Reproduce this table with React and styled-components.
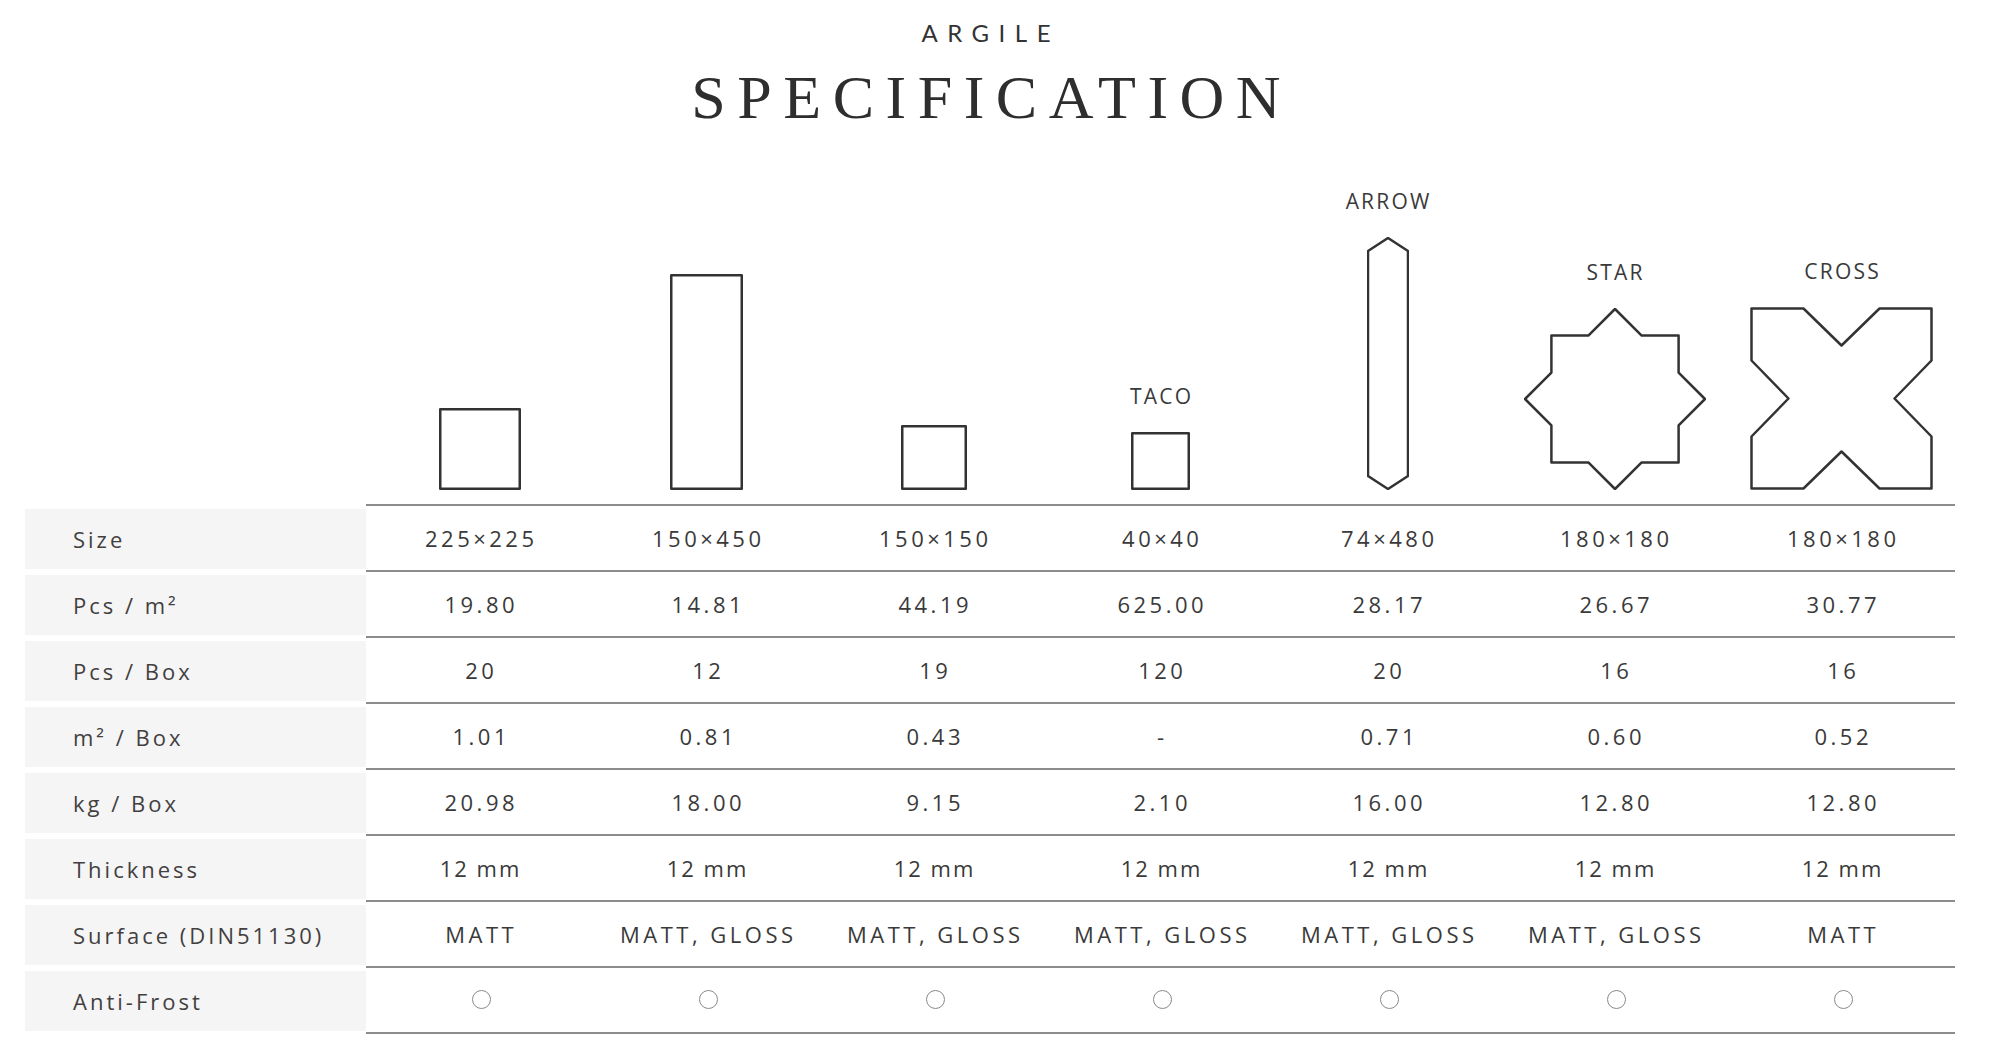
import React from 'react';
import styled, { createGlobalStyle } from 'styled-components';

const GlobalStyle = createGlobalStyle`
  body {
    margin: 0;
    background: #ffffff;
    font-family: "Open Sans", "Noto Sans", sans-serif;
    color: #3a3a3a;
  }
`

const Page = styled.div`
  width: 1930px;
  margin-left: 25px;
  padding-top: 18px;
  padding-bottom: 20px;
`

const Header = styled.header`
  display: flex;
  flex-direction: column;
  align-items: center;
  margin-left: -8px;
`

const Collection = styled.div`
  font-family: "Lato", "Open Sans", sans-serif;
  font-weight: 400;
  font-size: 24px;
  line-height: 30px;
  letter-spacing: 9.5px;
  padding-left: 9.5px;
  color: #333;
`

const Title = styled.h1`
  margin: 10px 0 0;
  font-family: "Liberation Serif", "Times New Roman", serif;
  font-weight: normal;
  font-size: 62px;
  line-height: 78px;
  letter-spacing: 11.5px;
  padding-left: 11.5px;
  color: #2e2e2e;
`

const Row = styled.div`
  display: grid;
  grid-template-columns: 341px 1fr;
`

const ShapeRow = styled(Row)`
  margin-top: 53px;
`

const ShapeCells = styled.div`
  display: grid;
  grid-template-columns: repeat(7, 1fr);
  align-items: end;
  padding-bottom: 13.5px;
  border-bottom: 2px solid #8c8c8c;
`

const ShapeCell = styled.div`
  display: flex;
  flex-direction: column;
  align-items: center;
`

const ShapeName = styled.div`
  font-size: 21px;
  line-height: 24px;
  letter-spacing: 2.2px;
  padding-left: 2.2px;
  margin-bottom: 24px;
  color: #3a3a3a;
`

const Label = styled.div`
  margin: 3px 0;
  background: #f5f5f5;
  display: flex;
  align-items: center;
  padding-left: 48px;
  font-size: 22px;
  letter-spacing: 3px;
  color: #433f3f;
`

const Cells = styled.div`
  display: grid;
  grid-template-columns: repeat(7, 1fr);
  height: 64px;
  border-bottom: 2px solid #8c8c8c;
`

const Cell = styled.div`
  display: flex;
  align-items: center;
  justify-content: center;
  font-size: 22px;
  letter-spacing: ${props => (props.$tight ? '2px' : '3.5px')};
  padding-left: ${props => (props.$tight ? '2px' : '3.5px')};
  color: #3a3a3a;
`

const Mark = styled.span`
  width: 17px;
  height: 17px;
  border: 1.5px solid #8a8a8a;
  border-radius: 50%;
`

const stroke = { fill: 'none', stroke: '#333', strokeWidth: 2.5, strokeLinejoin: 'round' };

const RectShape = ({ w, h }) => (
  <svg width={w} height={h} viewBox={`0 0 ${w} ${h}`}>
    <rect x="1.25" y="1.25" width={w - 2.5} height={h - 2.5} {...stroke} />
  </svg>
)

const ArrowShape = () => (
  <svg width="42" height="253" viewBox="-1 -1 42 253">
    <polygon points="20,0 40,13 40,238 20,251 0,238 0,13" {...stroke} />
  </svg>
)

const StarShape = () => (
  <svg width="182" height="182" viewBox="-1 -1 182 182">
    <polygon
      points="90,0 116.4,26.4 153.6,26.4 153.6,63.6 180,90 153.6,116.4 153.6,153.6 116.4,153.6 90,180 63.6,153.6 26.4,153.6 26.4,116.4 0,90 26.4,63.6 26.4,26.4 63.6,26.4"
      {...stroke}
    />
  </svg>
)

const CrossShape = () => (
  <svg width="183" height="183" viewBox="-1.5 -1.5 183 183">
    <polygon
      points="0,0 52,0 90,37 128,0 180,0 180,52 143,90 180,128 180,180 128,180 90,143 52,180 0,180 0,128 37,90 0,52"
      {...stroke}
    />
  </svg>
)

const shapes = [
  { name: null, drawing: <RectShape w={82} h={82} /> },
  { name: null, drawing: <RectShape w={73} h={216} /> },
  { name: null, drawing: <RectShape w={66} h={65} /> },
  { name: 'TACO', drawing: <RectShape w={59} h={58} /> },
  { name: 'ARROW', drawing: <ArrowShape /> },
  { name: 'STAR', drawing: <StarShape /> },
  { name: 'CROSS', drawing: <CrossShape /> },
]

const rows = [
  { label: 'Size', values: ['225×225', '150×450', '150×150', '40×40', '74×480', '180×180', '180×180'] },
  { label: 'Pcs / m²', values: ['19.80', '14.81', '44.19', '625.00', '28.17', '26.67', '30.77'] },
  { label: 'Pcs / Box', values: ['20', '12', '19', '120', '20', '16', '16'] },
  { label: 'm² / Box', values: ['1.01', '0.81', '0.43', '-', '0.71', '0.60', '0.52'] },
  { label: 'kg / Box', values: ['20.98', '18.00', '9.15', '2.10', '16.00', '12.80', '12.80'] },
  { label: 'Thickness', values: ['12 mm', '12 mm', '12 mm', '12 mm', '12 mm', '12 mm', '12 mm'], tight: true },
  { label: 'Surface (DIN51130)', values: ['MATT', 'MATT, GLOSS', 'MATT, GLOSS', 'MATT, GLOSS', 'MATT, GLOSS', 'MATT, GLOSS', 'MATT'] },
  { label: 'Anti-Frost', values: [true, true, true, true, true, true, true] },
]

const App = () => (
  <Page>
    <GlobalStyle />
    <Header>
      <Collection>ARGILE</Collection>
      <Title>SPECIFICATION</Title>
    </Header>
    <ShapeRow>
      <div />
      <ShapeCells>
        {shapes.map((shape, i) => (
          <ShapeCell key={i}>
            {shape.name && <ShapeName>{shape.name}</ShapeName>}
            {shape.drawing}
          </ShapeCell>
        ))}
      </ShapeCells>
    </ShapeRow>
    {rows.map(row => (
      <Row key={row.label}>
        <Label>{row.label}</Label>
        <Cells>
          {row.values.map((value, i) => (
            <Cell key={i} $tight={row.tight}>
              {value === true ? <Mark /> : value}
            </Cell>
          ))}
        </Cells>
      </Row>
    ))}
  </Page>
)

export default App;
